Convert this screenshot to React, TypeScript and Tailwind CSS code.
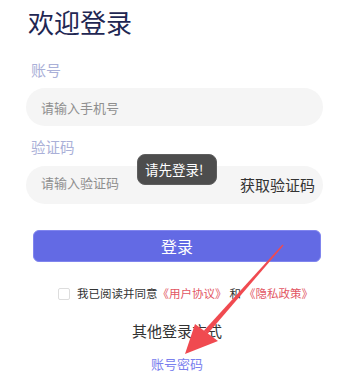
import React from 'react';

const Arrow: React.FC = () => (
  <svg className="absolute left-0 top-0 pointer-events-none" width="354" height="391" viewBox="0 0 354 391">
    <polygon points="283.5,245.5 282.5,244.5 204,330.5 207.5,334" fill="#f04a50" />
    <polygon points="185,354 195,324 218,341" fill="#f04a50" />
  </svg>
);

export default function App() {
  return (
    <div className="relative w-[354px] h-[391px] bg-white overflow-hidden font-['Noto_Sans_CJK_SC','Noto_Sans',sans-serif]">
      <div className="flex flex-col pl-[26px] pr-[31px]">
        <h1 className="mt-[6px] pl-[2px] text-[26px] leading-[32px] font-normal text-[#1f2753]">欢迎登录</h1>

        <label className="mt-[22px] pl-[5px] text-[15px] leading-[20px] text-[#aab0d8]">账号</label>
        <input
          className="mt-[8px] h-[38px] rounded-full bg-[#f5f5f5] pl-[15px] text-[13px] outline-none placeholder:text-[#8f8f8f]"
          placeholder="请输入手机号"
        />

        <label className="mt-[11px] pl-[5px] text-[14.5px] leading-[20px] text-[#aab0d8]">验证码</label>
        <div className="mt-[9px] h-[38px] rounded-full bg-[#f5f5f5] flex items-center pl-[15px] pr-[8px]">
          <input
            className="flex-1 min-w-0 bg-transparent text-[13px] pb-[4px] outline-none placeholder:text-[#8f8f8f]"
            placeholder="请输入验证码"
          />
          <span className="text-[15px] text-[#333333]">获取验证码</span>
        </div>

        <button className="mt-[26px] ml-[7px] w-[288px] h-[32px] rounded-[6px] bg-[#636ae4] border border-[#8085ee] text-white text-[16px] leading-none">
          登录
        </button>

        <div className="mt-[24px] ml-[32px] h-[16px] flex items-center text-[11.5px] text-[#333333] whitespace-nowrap">
          <span className="w-[12px] h-[12px] border border-[#dddddd] rounded-[2px] bg-white mr-[7px]" />
          <span>我已阅读并同意</span>
          <span className="text-[#e25563]">《用户协议》</span>
          <span className="mx-[3px]">和</span>
          <span className="text-[#e25563]">《隐私政策》</span>
        </div>
      </div>

      <p className="mt-[19px] text-center text-[15px] leading-[20px] text-[#333333]">其他登录方式</p>
      <p className="mt-[14px] text-center text-[13px] leading-[18px] text-[#7a80ee]">账号密码</p>

      <div className="absolute left-[137px] top-[154px] w-[80px] h-[31px] rounded-[8px] bg-[#4d4d4d] border border-[#5e5e5e] flex items-center pl-[7px] text-white text-[13.5px]">
        请先登录!
      </div>

      <Arrow />
    </div>
  );
}
